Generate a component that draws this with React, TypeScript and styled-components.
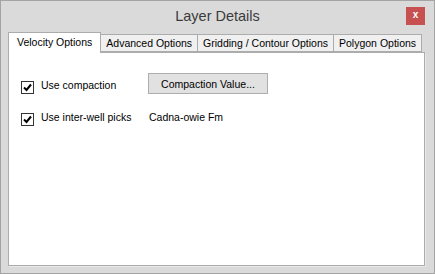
import React, { useState } from "react";
import styled, { createGlobalStyle } from "styled-components";

const GlobalStyle = createGlobalStyle`
  html, body {
    margin: 0;
    padding: 0;
    background: #dadada;
  }
  * {
    box-sizing: border-box;
  }
`;

const TABS = ["Velocity Options", "Advanced Options", "Gridding / Contour Options", "Polygon Options"];

function CheckMark() {
  return (
    <svg width="11" height="11" viewBox="0 0 11 11">
      <path d="M2 5.5 L4.5 8 L9 2.5" fill="none" stroke="#000" strokeWidth="2" />
    </svg>
  );
}

function CheckField({ label, checked }: { label: string; checked: boolean }) {
  return (
    <Field>
      <Box>{checked ? <CheckMark /> : null}</Box>
      <Label>{label}</Label>
    </Field>
  );
}

export default function App() {
  const [active, setActive] = useState(0);

  return (
    <>
      <GlobalStyle />
      <Window>
        <TitleBar>
          <Title>Layer Details</Title>
          <CloseBtn type="button" aria-label="Close">
            x
          </CloseBtn>
        </TitleBar>
        <Body>
          <TabStrip>
            {TABS.map((t, i) => (
              <Tab key={t} $active={i === active} onClick={() => setActive(i)}>
                {t}
              </Tab>
            ))}
          </TabStrip>
          <Panel>
            <Form>
              <CheckField label="Use compaction" checked />
              <Button type="button">Compaction Value...</Button>
              <CheckField label="Use inter-well picks" checked />
              <Value>Cadna-owie Fm</Value>
            </Form>
          </Panel>
        </Body>
      </Window>
    </>
  );
}

const Window = styled.div`
  width: 435px;
  height: 274px;
  display: flex;
  flex-direction: column;
  background: #dadada;
  border: 1px solid #a4a4a4;
  font-family: "Liberation Sans", Arial, sans-serif;
  font-size: 10.5px;
  color: #000;
`;

const TitleBar = styled.div`
  height: 30px;
  flex: none;
  position: relative;
  display: flex;
  align-items: center;
  justify-content: center;
`;

const Title = styled.div`
  font-size: 14.5px;
  color: #3a3a3a;
`;

const CloseBtn = styled.button`
  position: absolute;
  top: 6px;
  right: 9px;
  width: 19px;
  height: 18px;
  padding: 0 0 2px;
  border: none;
  background: #c75050;
  color: #fff;
  font-family: "Liberation Sans", Arial, sans-serif;
  font-weight: 700;
  font-size: 10px;
  line-height: 16px;
  cursor: pointer;
`;

const Body = styled.div`
  flex: 1;
  display: flex;
  flex-direction: column;
  padding: 0 9px 7px 7px;
  min-height: 0;
`;

const TabStrip = styled.div`
  display: flex;
  align-items: flex-end;
  height: 21px;
  flex: none;
  position: relative;
  z-index: 1;
`;

const Tab = styled.div<{ $active: boolean }>`
  height: ${(p) => (p.$active ? "21px" : "18px")};
  margin-bottom: ${(p) => (p.$active ? "-1px" : "0")};
  padding: ${(p) => (p.$active ? "3px 8px 0 8px" : "2px 5px 0 5px")};
  background: ${(p) => (p.$active ? "#fff" : "#f0f0f0")};
  border: 1px solid #acacac;
  border-bottom: ${(p) => (p.$active ? "none" : "1px solid #acacac")};
  white-space: nowrap;
  cursor: default;
  & + & {
    margin-left: -1px;
  }
`;

const Panel = styled.div`
  flex: 1;
  background: #fff;
  border: 1px solid #acacac;
  box-shadow: 1px 1px 0 #e8e8e8;
  padding: 20px 12px;
`;

const Form = styled.div`
  display: grid;
  grid-template-columns: 127px auto;
  grid-auto-rows: 21px;
  row-gap: 11px;
  align-items: center;
  justify-items: start;
`;

const Field = styled.div`
  display: flex;
  align-items: center;
  gap: 7px;
  padding-top: 7px;
`;

const Box = styled.div`
  width: 13px;
  height: 13px;
  border: 1px solid #333;
  background: #fff;
  display: flex;
  align-items: center;
  justify-content: center;
`;

const Label = styled.span`
  margin-top: -5px;
`;

const Button = styled.button`
  width: 120px;
  height: 21px;
  border: 1px solid #adadad;
  background: #e1e1e1;
  font-family: "Liberation Sans", Arial, sans-serif;
  font-size: 10.5px;
  color: #000;
  padding: 0;
`;

const Value = styled.span`
  padding-left: 1px;
  padding-top: 2px;
`;
